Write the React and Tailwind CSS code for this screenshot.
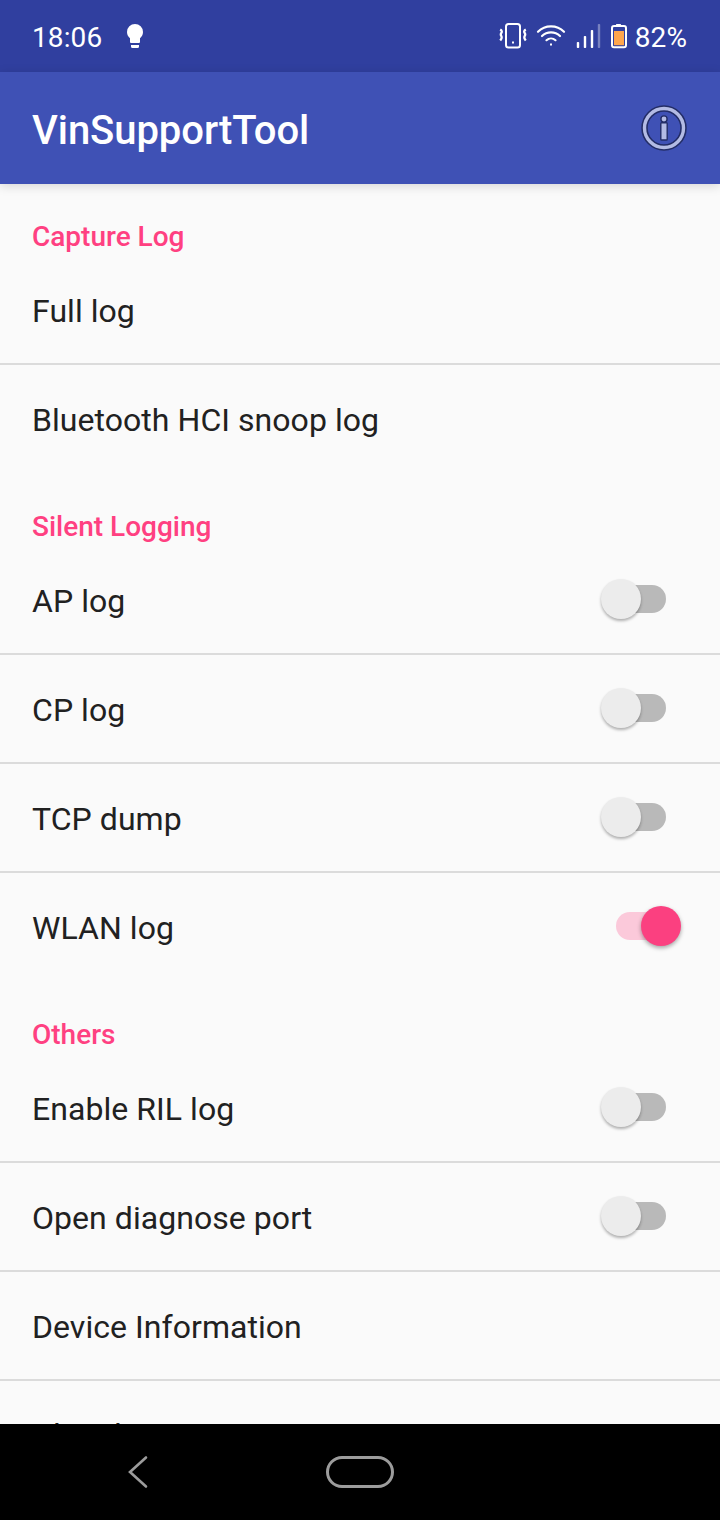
import React from "react";

function StatusBar() {
  return (
    <div className="flex h-[72px] shrink-0 items-center bg-[#303f9f] pl-8 pr-[33px] text-[28px] text-white">
      <span className="mt-[3px] w-[94px] leading-8 tracking-[0.1px]">18:06</span>
      <svg width="18" height="26" viewBox="0 0 18 26" fill="white">
        <path d="M9 1a8 8 0 0 1 8 8c0 3-1.400 4.700-3 6.200V19a1 1 0 0 1-1 1H5a1 1 0 0 1-1-1v-3.800C2.400 13.700 1 12 1 9a8 8 0 0 1 8-8z" />
        <path d="M5 22h8v1.500a1.500 1.500 0 0 1-1.500 1.500h-5A1.500 1.500 0 0 1 5 23.500z" />
      </svg>
      <div className="ml-auto flex items-center">
        <svg width="28" height="28" viewBox="0 0 28 28" fill="none" stroke="white">
          <rect x="7" y="2" width="14" height="23.500" rx="2.500" strokeWidth="2" />
          <rect x="13" y="19.500" width="2" height="2" fill="white" stroke="none" />
          <path d="M1.200 7.600q2.600 1.600 1 3.600 -0.800 1.300 0 2.600 0.900 1.600 0 3.200 -0.500 1 -1 1.600M26.800 7.600q-2.600 1.600 -1 3.600 0.800 1.300 0 2.600 -0.900 1.600 0 3.200 0.500 1 1 1.600" strokeWidth="2.300" strokeLinejoin="round" />
        </svg>
        <svg className="ml-[9px]" width="30" height="28" viewBox="0 0 30 28" fill="none" stroke="white" strokeWidth="2.200" strokeLinecap="round">
          <path d="M2 9.800a18.500 18.500 0 0 1 26 0M6 14a13 13 0 0 1 18 0M10.500 18.200a6.800 6.800 0 0 1 9 0" />
          <rect x="14" y="21.500" width="2" height="2" fill="white" stroke="none" />
        </svg>
        <svg className="ml-[10px]" width="26" height="28" viewBox="0 0 26 28" fill="white">
          <rect x="0.800" y="20" width="2.400" height="6" rx="0.800" />
          <rect x="7.800" y="14" width="2.400" height="12" rx="0.800" />
          <rect x="14.800" y="8" width="2.400" height="18" rx="0.800" />
          <rect x="21.800" y="2" width="2.400" height="24" rx="0.800" opacity="0.350" />
        </svg>
        <svg className="ml-[8px]" width="18" height="28" viewBox="0 0 18 28">
          <rect x="6" y="2" width="5" height="2" rx="0.500" fill="white" />
          <rect x="2" y="4" width="14" height="21.200" rx="2" fill="#303f9f" stroke="white" strokeWidth="2" />
          <rect x="4" y="9" width="10" height="14.200" fill="#ffa64d" />
        </svg>
        <span className="ml-[7px] mt-[3px] leading-8 tracking-[0.1px]">82%</span>
      </div>
    </div>
  );
}

function AppBar() {
  return (
    <div className="relative z-10 flex h-28 shrink-0 items-center justify-between bg-[#3f51b5] pl-8 pr-[32px] shadow-[0_2px_10px_rgba(0,0,0,0.15)]">
      <h1 className="mt-1.5 text-[40px] font-medium leading-[48px] tracking-[-0.06px] text-white">VinSupportTool</h1>
      <svg width="48" height="48" viewBox="0 0 48 48" fill="none">
        <circle cx="24" cy="24" r="19.500" stroke="#232d66" strokeWidth="6.500" />
        <circle cx="24" cy="24" r="19.500" stroke="#b3bbe4" strokeWidth="3.400" />
        <circle cx="24" cy="15" r="3.100" fill="#b3bbe4" stroke="#232d66" strokeWidth="1.400" />
        <rect x="20.800" y="18.800" width="6.400" height="17.200" rx="0.800" fill="#b3bbe4" stroke="#232d66" strokeWidth="1.400" />
      </svg>
    </div>
  );
}

function Toggle({ on }) {
  if (on) {
    return (
      <div className="mb-px flex h-10 w-[66px] items-center justify-end">
        <div className="-mr-5 h-7 w-[45px] rounded-l-full bg-[#fbc9da]" />
        <div className="relative size-10 rounded-full bg-[#fb4080] shadow-[0_2px_4px_rgba(0,0,0,0.35)]" />
      </div>
    );
  }
  return (
    <div className="mb-px mr-[15px] flex h-10 w-[66px] items-center pl-px">
      <div className="relative size-10 shrink-0 rounded-full bg-[#ececec] shadow-[0_2px_3px_rgba(0,0,0,0.3)]" />
      <div className="-ml-5 h-7 w-[45px] rounded-r-full bg-[#b9b9b9]" />
    </div>
  );
}

function Row({ label, toggle, last, raised }) {
  return (
    <div className={"flex shrink-0 items-center justify-between border-[#dbdbdb] pl-8 pr-[39px] " + (last ? "h-[107px]" : "h-[109px] border-b-2")}>
      <span className={"text-[32px] leading-[38px] tracking-[0.05px] text-[#212121] " + (raised ? "mt-0" : "mt-0.5")}>{label}</span>
      {toggle && <Toggle on={toggle === "on"} />}
    </div>
  );
}

function Header({ children, first }) {
  return (
    <div className={"flex shrink-0 items-end px-8 pb-[3px] " + (first ? "h-[72px]" : "h-[74px]")}>
      <h2 className="text-[28px] font-medium leading-8 text-[#ff4081]">{children}</h2>
    </div>
  );
}

const sections = [
  { title: "Capture Log", rows: [["Full log"], ["Bluetooth HCI snoop log"]] },
  { title: "Silent Logging", rows: [["AP log", "off"], ["CP log", "off"], ["TCP dump", "off"], ["WLAN log", "on"]] },
  { title: "Others", rows: [["Enable RIL log", "off"], ["Open diagnose port", "off"], ["Device Information"], ["Clear log"]] },
];

export default function App() {
  return (
    <div className="flex h-[1520px] w-[720px] flex-col overflow-hidden bg-[#fafafa] font-['Roboto',sans-serif]">
      <StatusBar />
      <AppBar />
      <main className="flex min-h-0 flex-1 flex-col overflow-hidden">
        {sections.map((s, i) => (
          <section key={s.title} className="flex shrink-0 flex-col">
            <Header first={i === 0}>{s.title}</Header>
            {s.rows.map(([label, toggle], j) => (
              <Row
                key={label}
                label={label}
                toggle={toggle}
                last={j === s.rows.length - 1}
                raised={i === sections.length - 1 && j === s.rows.length - 1}
              />
            ))}
          </section>
        ))}
      </main>
      <nav className="grid h-24 shrink-0 grid-cols-[276px_168px_276px] items-center justify-items-center bg-black">
        <svg width="24" height="36" viewBox="0 0 24 36" fill="none" stroke="#9c9c9c" strokeWidth="2.600" strokeLinecap="round">
          <path d="M20 3.500L4 18l16 14.500" />
        </svg>
        <div className="h-8 w-[68px] rounded-full border-[3px] border-[#9c9c9c]" />
      </nav>
    </div>
  );
}
